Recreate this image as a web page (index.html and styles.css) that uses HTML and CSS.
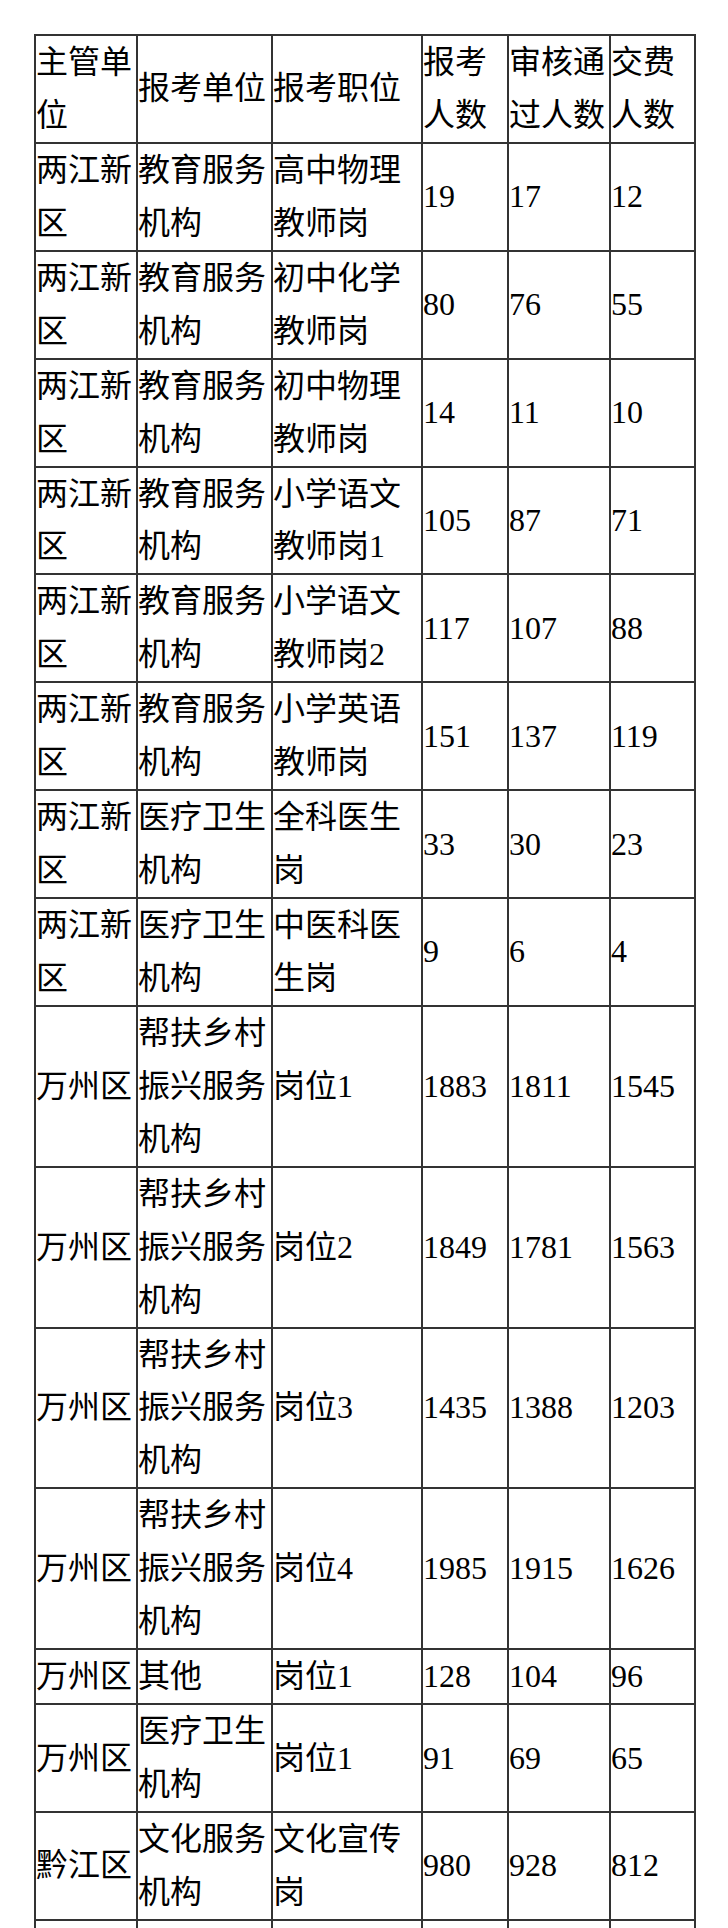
FILE: index.html
```html
<!DOCTYPE html>
<html lang="zh-CN">
<head>
<meta charset="utf-8">
<title>报考人数统计</title>
<link rel="stylesheet" href="styles.css">
</head>
<body>
<div class="wrap">
  <div class="sheet">
    <div class="cell">主管单位</div><div class="cell">报考单位</div><div class="cell">报考职位</div><div class="cell">报考人数</div><div class="cell">审核通过人数</div><div class="cell">交费人数</div>

    <div class="cell">两江新区</div><div class="cell">教育服务机构</div><div class="cell">高中物理教师岗</div><div class="cell">19</div><div class="cell">17</div><div class="cell">12</div>
    <div class="cell">两江新区</div><div class="cell">教育服务机构</div><div class="cell">初中化学教师岗</div><div class="cell">80</div><div class="cell">76</div><div class="cell">55</div>
    <div class="cell">两江新区</div><div class="cell">教育服务机构</div><div class="cell">初中物理教师岗</div><div class="cell">14</div><div class="cell">11</div><div class="cell">10</div>
    <div class="cell">两江新区</div><div class="cell">教育服务机构</div><div class="cell">小学语文教师岗1</div><div class="cell">105</div><div class="cell">87</div><div class="cell">71</div>
    <div class="cell">两江新区</div><div class="cell">教育服务机构</div><div class="cell">小学语文教师岗2</div><div class="cell">117</div><div class="cell">107</div><div class="cell">88</div>
    <div class="cell">两江新区</div><div class="cell">教育服务机构</div><div class="cell">小学英语教师岗</div><div class="cell">151</div><div class="cell">137</div><div class="cell">119</div>
    <div class="cell">两江新区</div><div class="cell">医疗卫生机构</div><div class="cell">全科医生岗</div><div class="cell">33</div><div class="cell">30</div><div class="cell">23</div>
    <div class="cell">两江新区</div><div class="cell">医疗卫生机构</div><div class="cell">中医科医生岗</div><div class="cell">9</div><div class="cell">6</div><div class="cell">4</div>
    <div class="cell">万州区</div><div class="cell">帮扶乡村振兴服务机构</div><div class="cell">岗位1</div><div class="cell">1883</div><div class="cell">1811</div><div class="cell">1545</div>
    <div class="cell">万州区</div><div class="cell">帮扶乡村振兴服务机构</div><div class="cell">岗位2</div><div class="cell">1849</div><div class="cell">1781</div><div class="cell">1563</div>
    <div class="cell">万州区</div><div class="cell">帮扶乡村振兴服务机构</div><div class="cell">岗位3</div><div class="cell">1435</div><div class="cell">1388</div><div class="cell">1203</div>
    <div class="cell">万州区</div><div class="cell">帮扶乡村振兴服务机构</div><div class="cell">岗位4</div><div class="cell">1985</div><div class="cell">1915</div><div class="cell">1626</div>
    <div class="cell">万州区</div><div class="cell">其他</div><div class="cell">岗位1</div><div class="cell">128</div><div class="cell">104</div><div class="cell">96</div>
    <div class="cell">万州区</div><div class="cell">医疗卫生机构</div><div class="cell">岗位1</div><div class="cell">91</div><div class="cell">69</div><div class="cell">65</div>
    <div class="cell">黔江区</div><div class="cell">文化服务机构</div><div class="cell">文化宣传岗</div><div class="cell">980</div><div class="cell">928</div><div class="cell">812</div>
    <div class="cell cell-empty"></div><div class="cell cell-empty"></div><div class="cell cell-empty"></div><div class="cell cell-empty"></div><div class="cell cell-empty"></div><div class="cell cell-empty"></div>
  </div>
</div>
</body>
</html>
```

FILE: styles.css
```css
html, body {
  margin: 0;
  padding: 0;
  background: #ffffff;
}

.wrap {
  padding: 34px 0 0 34px;
}

.sheet {
  display: grid;
  grid-template-columns: 102px 135px 150px 86px 102px 85px;
  width: max-content;
  border-top: 2px solid #333333;
  border-left: 2px solid #333333;
  font-family: "Liberation Serif", "Noto Sans CJK SC", serif;
  font-size: 32px;
  line-height: 52.94px;
  color: #000000;
}

.cell {
  box-sizing: border-box;
  display: flex;
  align-items: center;
  padding: 0;
  border-right: 2px solid #333333;
  border-bottom: 2px solid #333333;
  word-break: break-all;
}

.cell-empty {
  min-height: 55px;
}
```
